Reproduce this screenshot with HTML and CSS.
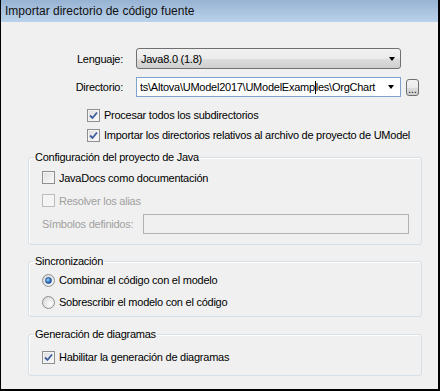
FILE: index.html
```html
<!DOCTYPE html>
<html lang="es">
<head>
<meta charset="UTF-8">
<meta name="viewport" content="width=device-width, initial-scale=1.0">
<title>Importar directorio de código fuente</title>
<link rel="stylesheet" href="styles.css">
</head>
<body>

<div class="dialog">
  <div class="titlebar">Importar directorio de código fuente</div>

  <div class="dialog-body">
    <div class="field-row">
      <span class="field-label">Lenguaje:</span>
      <div class="combo">
        <span>Java8.0 (1.8)</span>
        <span class="arrow"></span>
      </div>
    </div>

    <div class="field-row field-row-dir">
      <span class="field-label">Directorio:</span>
      <div class="path-input">
        <span>ts\Altova\UModel2017\UModelExamp</span><span class="caret"></span><span>les\OrgChart</span>
        <span class="arrow"></span>
      </div>
      <button class="browse">...</button>
    </div>

    <div class="options">
      <div class="check-row">
        <span class="checkbox checked"><svg width="9" height="9" viewBox="0 0 9 9"><path d="M1 4.5 L3.5 7 L8 1.5" /></svg></span>
        Procesar todos los subdirectorios
      </div>
      <div class="check-row">
        <span class="checkbox checked"><svg width="9" height="9" viewBox="0 0 9 9"><path d="M1 4.5 L3.5 7 L8 1.5" /></svg></span>
        Importar los directorios relativos al archivo de proyecto de UModel
      </div>
    </div>

    <fieldset class="group group-java">
      <legend>Configuración del proyecto de Java</legend>
      <div class="check-row">
        <span class="checkbox"></span>
        JavaDocs como documentación
      </div>
      <div class="check-row disabled">
        <span class="checkbox"></span>
        Resolver los alias
      </div>
      <div class="symbols-row disabled">
        <span class="symbols-label">Símbolos definidos:</span>
        <div class="symbols-input"></div>
      </div>
    </fieldset>

    <fieldset class="group group-sync">
      <legend>Sincronización</legend>
      <div class="radio-row">
        <span class="radio selected"></span>
        Combinar el código con el modelo
      </div>
      <div class="radio-row">
        <span class="radio"></span>
        Sobrescribir el modelo con el código
      </div>
    </fieldset>

    <fieldset class="group group-diagrams">
      <legend>Generación de diagramas</legend>
      <div class="check-row">
        <span class="checkbox checked"><svg width="9" height="9" viewBox="0 0 9 9"><path d="M1 4.5 L3.5 7 L8 1.5" /></svg></span>
        Habilitar la generación de diagramas
      </div>
    </fieldset>
  </div>
</div>

</body>
</html>
```

FILE: styles.css
```css
:root {
  --face: #f0f0f0;
  --text: #000;
  --disabled: #a0a0a0;
  --group-line: #d5dfe5;
  --check-blue: #3d5d9c;
}

body {
  margin: 0;
  font-family: 'Liberation Sans', Arial, sans-serif;
  font-size: 11px;
  color: var(--text);
  background: var(--face);
}

.dialog {
  width: 440px;
  height: 391px;
  box-sizing: border-box;
  border-left: 1px solid #000;
  border-right: 2px solid #000;
  border-bottom: 2px solid #000;
  background: var(--face);
}

.titlebar {
  height: 22px;
  line-height: 22px;
  padding-left: 4px;
  font-size: 12px;
  background: linear-gradient(#97b3d3, #bad2eb);
  color: #111;
}

.dialog-body {
  padding-top: 26px;
  letter-spacing: -0.25px;
}

/* label + control rows */
.field-row {
  display: flex;
  align-items: center;
  height: 21px;
}

.field-row-dir {
  margin-top: 8px;
  height: 20px;
}

.field-label {
  width: 122px;
  margin-right: 13px;
  text-align: right;
}

.combo {
  width: 265px;
  height: 21px;
  box-sizing: border-box;
  display: flex;
  align-items: center;
  justify-content: space-between;
  padding: 0 5px 0 4px;
  border: 1px solid #707070;
  border-radius: 3px;
  background: linear-gradient(#f2f2f2 0%, #ebebeb 50%, #dddddd 51%, #cfcfcf 100%);
}

.arrow {
  width: 0;
  height: 0;
  border-left: 3.5px solid transparent;
  border-right: 3.5px solid transparent;
  border-top: 4px solid #000;
}

.path-input {
  width: 265px;
  height: 20px;
  box-sizing: border-box;
  display: flex;
  align-items: center;
  padding: 0 6px 0 3px;
  border: 1px solid #7da2ce;
  background: #fff;
  white-space: nowrap;
  overflow: hidden;
}

.path-input .arrow {
  margin-left: auto;
}

.caret {
  display: inline-block;
  width: 1px;
  height: 13px;
  background: #000;
}

.browse {
  width: 13px;
  height: 17px;
  margin-left: 5px;
  padding: 0;
  font-family: inherit;
  font-size: 10px;
  line-height: 20px;
  border: 1px solid #707070;
  border-radius: 3px;
  background: linear-gradient(#f2f2f2 0%, #ebebeb 50%, #dddddd 51%, #cfcfcf 100%);
  overflow: hidden;
}

/* checkboxes and radios */
.options {
  margin-top: 8px;
  padding-left: 86px;
}

.check-row, .radio-row {
  display: flex;
  align-items: center;
  height: 20px;
}

.checkbox {
  width: 13px;
  height: 13px;
  box-sizing: border-box;
  margin-right: 4px;
  border: 1px solid #8e8f8f;
  background: linear-gradient(135deg, #dcdcdc, #fdfdfd);
  box-shadow: inset 0 0 0 1px #f4f4f4;
  display: flex;
  align-items: center;
  justify-content: center;
}

.checkbox svg path {
  fill: none;
  stroke: var(--check-blue);
  stroke-width: 1.8;
}

.radio {
  width: 13px;
  height: 13px;
  box-sizing: border-box;
  margin-right: 4px;
  border: 1px solid #8e8f8f;
  border-radius: 50%;
  background: radial-gradient(circle at 65% 65%, #fdfdfd, #d2d2d2);
  display: flex;
  align-items: center;
  justify-content: center;
}

.radio.selected::after {
  content: "";
  width: 5px;
  height: 5px;
  border-radius: 50%;
  background: radial-gradient(circle at 35% 35%, #9fd3ff, #1b61b4 70%);
  border: 1px solid #1c4f91;
}

.disabled {
  color: var(--disabled);
}

.disabled .checkbox {
  border-color: #bcbcbc;
  background: #f4f4f4;
  box-shadow: none;
}

/* group boxes */
.group {
  margin: 0 0 0 27px;
  width: 394px;
  box-sizing: border-box;
  padding: 2px 0 0 13px;
  border: 1px solid var(--group-line);
  border-radius: 3px;
  box-shadow: inset 1px 1px 0 #fff;
}

.group legend {
  margin-left: -8px;
  padding: 0 1px;
  line-height: 14px;
}

.group-java {
  margin-top: 5px;
  padding-bottom: 10px;
}

.group-java .check-row {
  height: 23px;
}

.symbols-row {
  display: flex;
  align-items: center;
  margin-top: 2px;
}

.symbols-label {
  width: 101px;
}

.symbols-input {
  width: 266px;
  height: 20px;
  box-sizing: border-box;
  border: 1px solid #adb2b5;
  background: var(--face);
}

.group-sync {
  margin-top: 9px;
  padding-top: 1px;
  padding-bottom: 3px;
}

.group-sync .radio-row {
  height: 22px;
}

.group-diagrams {
  margin-top: 10px;
  padding-top: 5px;
  padding-bottom: 7px;
}

.group-diagrams .check-row {
  height: 22px;
}
```
